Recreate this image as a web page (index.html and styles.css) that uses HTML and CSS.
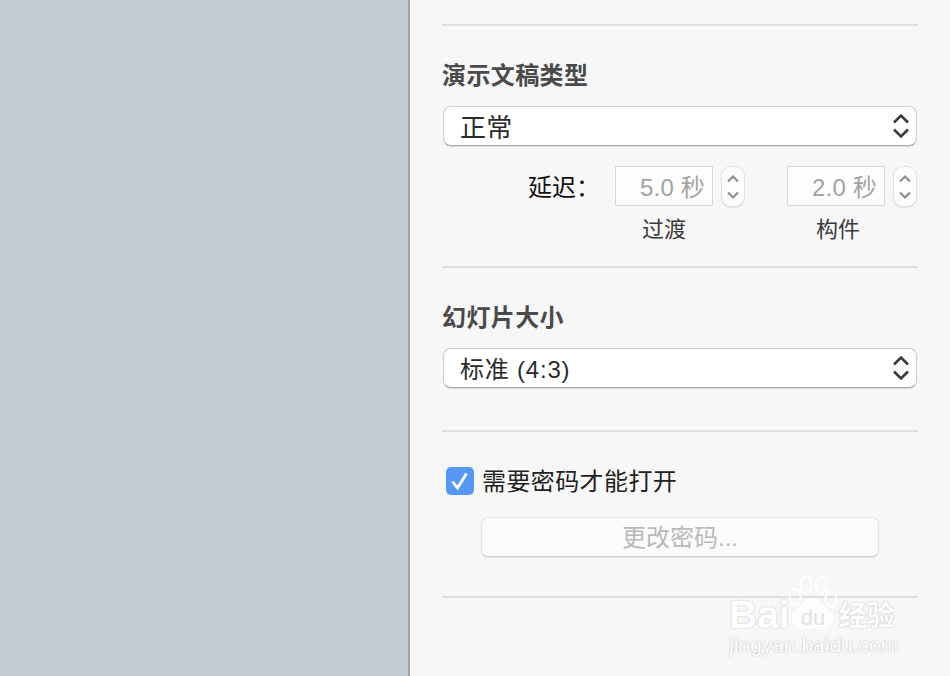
FILE: index.html
```html
<!DOCTYPE html>
<html lang="zh-CN">
<head>
<meta charset="utf-8">
<title>演示文稿设置</title>
<link rel="stylesheet" href="styles.css">
</head>
<body>
<div class="app">
  <div class="canvas"></div>
  <aside class="panel">
    <section class="section s-type">
      <h2 class="title">演示文稿类型</h2>
      <div class="select">
        <span class="select-text big">正常</span>
        <svg class="chev" width="18" height="26" viewBox="0 0 18 26"><path d="M2 9.5 9 2.5 16 9.5M2 16.5 9 23.5 16 16.5" fill="none" stroke="#3c3c3c" stroke-width="2.6"/></svg>
      </div>
      <div class="delay-row">
        <span class="delay-label">延迟：</span>
        <div class="spin-col">
          <div class="spin">
            <div class="field"><span class="field-text">5.0 秒</span></div>
            <div class="stepper"><svg width="14" height="30" viewBox="0 0 14 30"><path d="M2 9.5 7 4.5 12 9.5M2 20.5 7 25.5 12 20.5" fill="none" stroke="#8f8f8f" stroke-width="2.2"/></svg></div>
          </div>
          <div class="caption">过渡</div>
        </div>
        <div class="spin-col">
          <div class="spin">
            <div class="field"><span class="field-text">2.0 秒</span></div>
            <div class="stepper"><svg width="14" height="30" viewBox="0 0 14 30"><path d="M2 9.5 7 4.5 12 9.5M2 20.5 7 25.5 12 20.5" fill="none" stroke="#8f8f8f" stroke-width="2.2"/></svg></div>
          </div>
          <div class="caption nudge">构件</div>
        </div>
      </div>
    </section>
    <section class="section s-size">
      <h2 class="title">幻灯片大小</h2>
      <div class="select">
        <span class="select-text wide">标准 (4:3)</span>
        <svg class="chev" width="18" height="26" viewBox="0 0 18 26"><path d="M2 9.5 9 2.5 16 9.5M2 16.5 9 23.5 16 16.5" fill="none" stroke="#3c3c3c" stroke-width="2.6"/></svg>
      </div>
    </section>
    <section class="section s-pass">
      <label class="check-row">
        <span class="check"><svg width="20" height="20" viewBox="0 0 20 20"><path d="M2.500 10.500 7.500 17 16.500 2.500" fill="none" stroke="#fff" stroke-width="2.800"/></svg></span>
        <span class="check-text">需要密码才能打开</span>
      </label>
      <div class="button">更改密码...</div>
    </section>
    <div class="rule-end"></div>
  </aside>
</div>
<div class="mark">
  <div class="mark-top">
    <span class="mark-bai">Bai</span>
    <svg class="paw" width="50" height="56" viewBox="0 0 50 56">
      <g fill="none" stroke="#fff" stroke-width="1.800">
        <ellipse cx="8" cy="22" rx="5.500" ry="8"/>
        <ellipse cx="19" cy="10" rx="5.500" ry="8.500"/>
        <ellipse cx="34" cy="10" rx="5.500" ry="8.500"/>
        <ellipse cx="44" cy="24" rx="5.500" ry="8"/>
        <path d="M26 24c6 0 8 6 13 10 8 6 8 18-4 19-4 .4-6-1-9-1s-6 2-10 1C4 52 3 40 11 34c6-4 8-10 15-10z" fill="#fff" fill-opacity=".75"/>
      </g>
      <text class="paw-text" x="26" y="50">du</text>
    </svg>
    <span class="mark-cn">经验</span>
  </div>
  <div class="mark-url">jingyan.baidu.com</div>
</div>
</body>
</html>
```
FILE: styles.css
```css
* { box-sizing: border-box; }
html, body { margin: 0; height: 100%; overflow: hidden; }
body {
  width: 950px;
  height: 676px;
  position: relative;
  font-family: "Liberation Sans", "Noto Sans CJK SC", sans-serif;
  background: #f7f7f7;
}
.app { display: flex; height: 676px; }
.canvas {
  width: 410px;
  flex: none;
  background: #c4cbd3;
  border-right: 2px solid #a1a5aa;
}
.panel {
  flex: none;
  width: 540px;
  background: #f7f7f7;
  padding: 24px 32px 0;
  display: flex;
  flex-direction: column;
}
.section { border-top: 2px solid #dfdfdf; }
.s-type { height: 242px; }
.s-size { height: 164px; }
.s-pass { height: 166px; }
.rule-end { border-top: 2px solid #dfdfdf; }
.title {
  margin: 0;
  font-size: 24px;
  line-height: 34px;
  font-weight: 700;
  color: #4a4a4a;
  letter-spacing: .4px;
}
.s-type .title { padding-top: 33px; }
.s-size .title { padding-top: 33px; }
.select {
  margin: 13px 1px 0;
  height: 40px;
  width: 474px;
  background: #fff;
  border: 1px solid #cfcfcf;
  border-bottom-color: #a9a9a9;
  border-radius: 8px;
  box-shadow: 0 1px 1px rgba(0,0,0,.12);
  padding: 0 6px 0 16px;
  display: flex;
  align-items: center;
  justify-content: space-between;
}
.select-text { font-size: 24px; line-height: 34px; padding-top: 4px; color: #2b2b2b; }
.select-text.big { font-size: 26px; letter-spacing: .2px; }
.select-text.wide { letter-spacing: .8px; }
.delay-row { display: flex; margin-top: 20px; }
.delay-label {
  width: 173px;
  padding: 2px 0 0 86px;
  font-size: 24px;
  line-height: 40px;
  color: #111;
  white-space: nowrap;
  flex: none;
}
.spin-col { width: 172px; flex: none; }
.spin-col:last-child { width: 131px; }
.spin { display: flex; gap: 8px; }
.field {
  width: 98px;
  height: 40px;
  background: #fdfdfd;
  border: 1px solid #d8d8d8;
  font-size: 24px;
  line-height: 42px;
  text-align: right;
  padding-right: 7px;
  color: #a3a3a3;
  white-space: nowrap;
}
.field-text { letter-spacing: .2px; }
.stepper {
  width: 24px;
  height: 41px;
  background: #fdfdfd;
  border: 1px solid #e2e2e2;
  border-radius: 10px;
  box-shadow: 0 1px 1px rgba(0,0,0,.1);
  display: flex;
  align-items: center;
  justify-content: center;
}
.caption {
  width: 98px;
  font-size: 22px;
  line-height: 28px;
  margin-top: 9px;
  color: #3a3a3a;
  text-align: center;
}
.caption.nudge { margin-left: 2px; }
.check-row { display: flex; align-items: center; height: 28px; margin: 35px 0 0 4px; }
.check {
  width: 28px;
  height: 28px;
  border-radius: 5px;
  background: #5597f6;
  display: flex;
  align-items: center;
  justify-content: center;
  flex: none;
}
.check-text {
  margin-left: 8px;
  font-size: 24px;
  line-height: 26px;
  padding-top: 2px;
  letter-spacing: .4px;
  color: #222;
  white-space: nowrap;
}
.button {
  margin: 22px 0 0 39px;
  width: 398px;
  height: 40px;
  background: #fbfbfb;
  border: 1px solid #e4e4e4;
  border-bottom-color: #d2d2d2;
  border-radius: 7px;
  box-shadow: 0 1px 1px rgba(0,0,0,.08);
  font-size: 24px;
  line-height: 40px;
  text-align: center;
  color: #b9b9b9;
}
.mark {
  position: absolute;
  left: 729px;
  top: 572px;
  width: 180px;
}
.mark-top { display: flex; align-items: flex-end; height: 60px; }
.mark-bai {
  font-size: 39px;
  line-height: 34px;
  font-weight: 700;
  color: #fff;
  text-shadow: 0 0 1px #ccc, 0 0 2px #ccc;
}
.paw { margin: 0 0 1px -3px; flex: none; }
.paw-text {
  font-size: 22px;
  text-anchor: middle;
  fill: #e2e2e2;
}
.mark-cn {
  margin-left: 2px;
  font-size: 28px;
  line-height: 30px;
  font-weight: 700;
  color: #fff;
  text-shadow: 0 0 1px #bbb, 0 0 2px #ccc;
  white-space: nowrap;
}
.mark-url {
  margin-top: 1px;
  font-size: 21px;
  line-height: 24px;
  color: #fff;
  text-shadow: 0 0 1px #bbb, 0 0 2px #ccc;
  white-space: nowrap;
}
```
